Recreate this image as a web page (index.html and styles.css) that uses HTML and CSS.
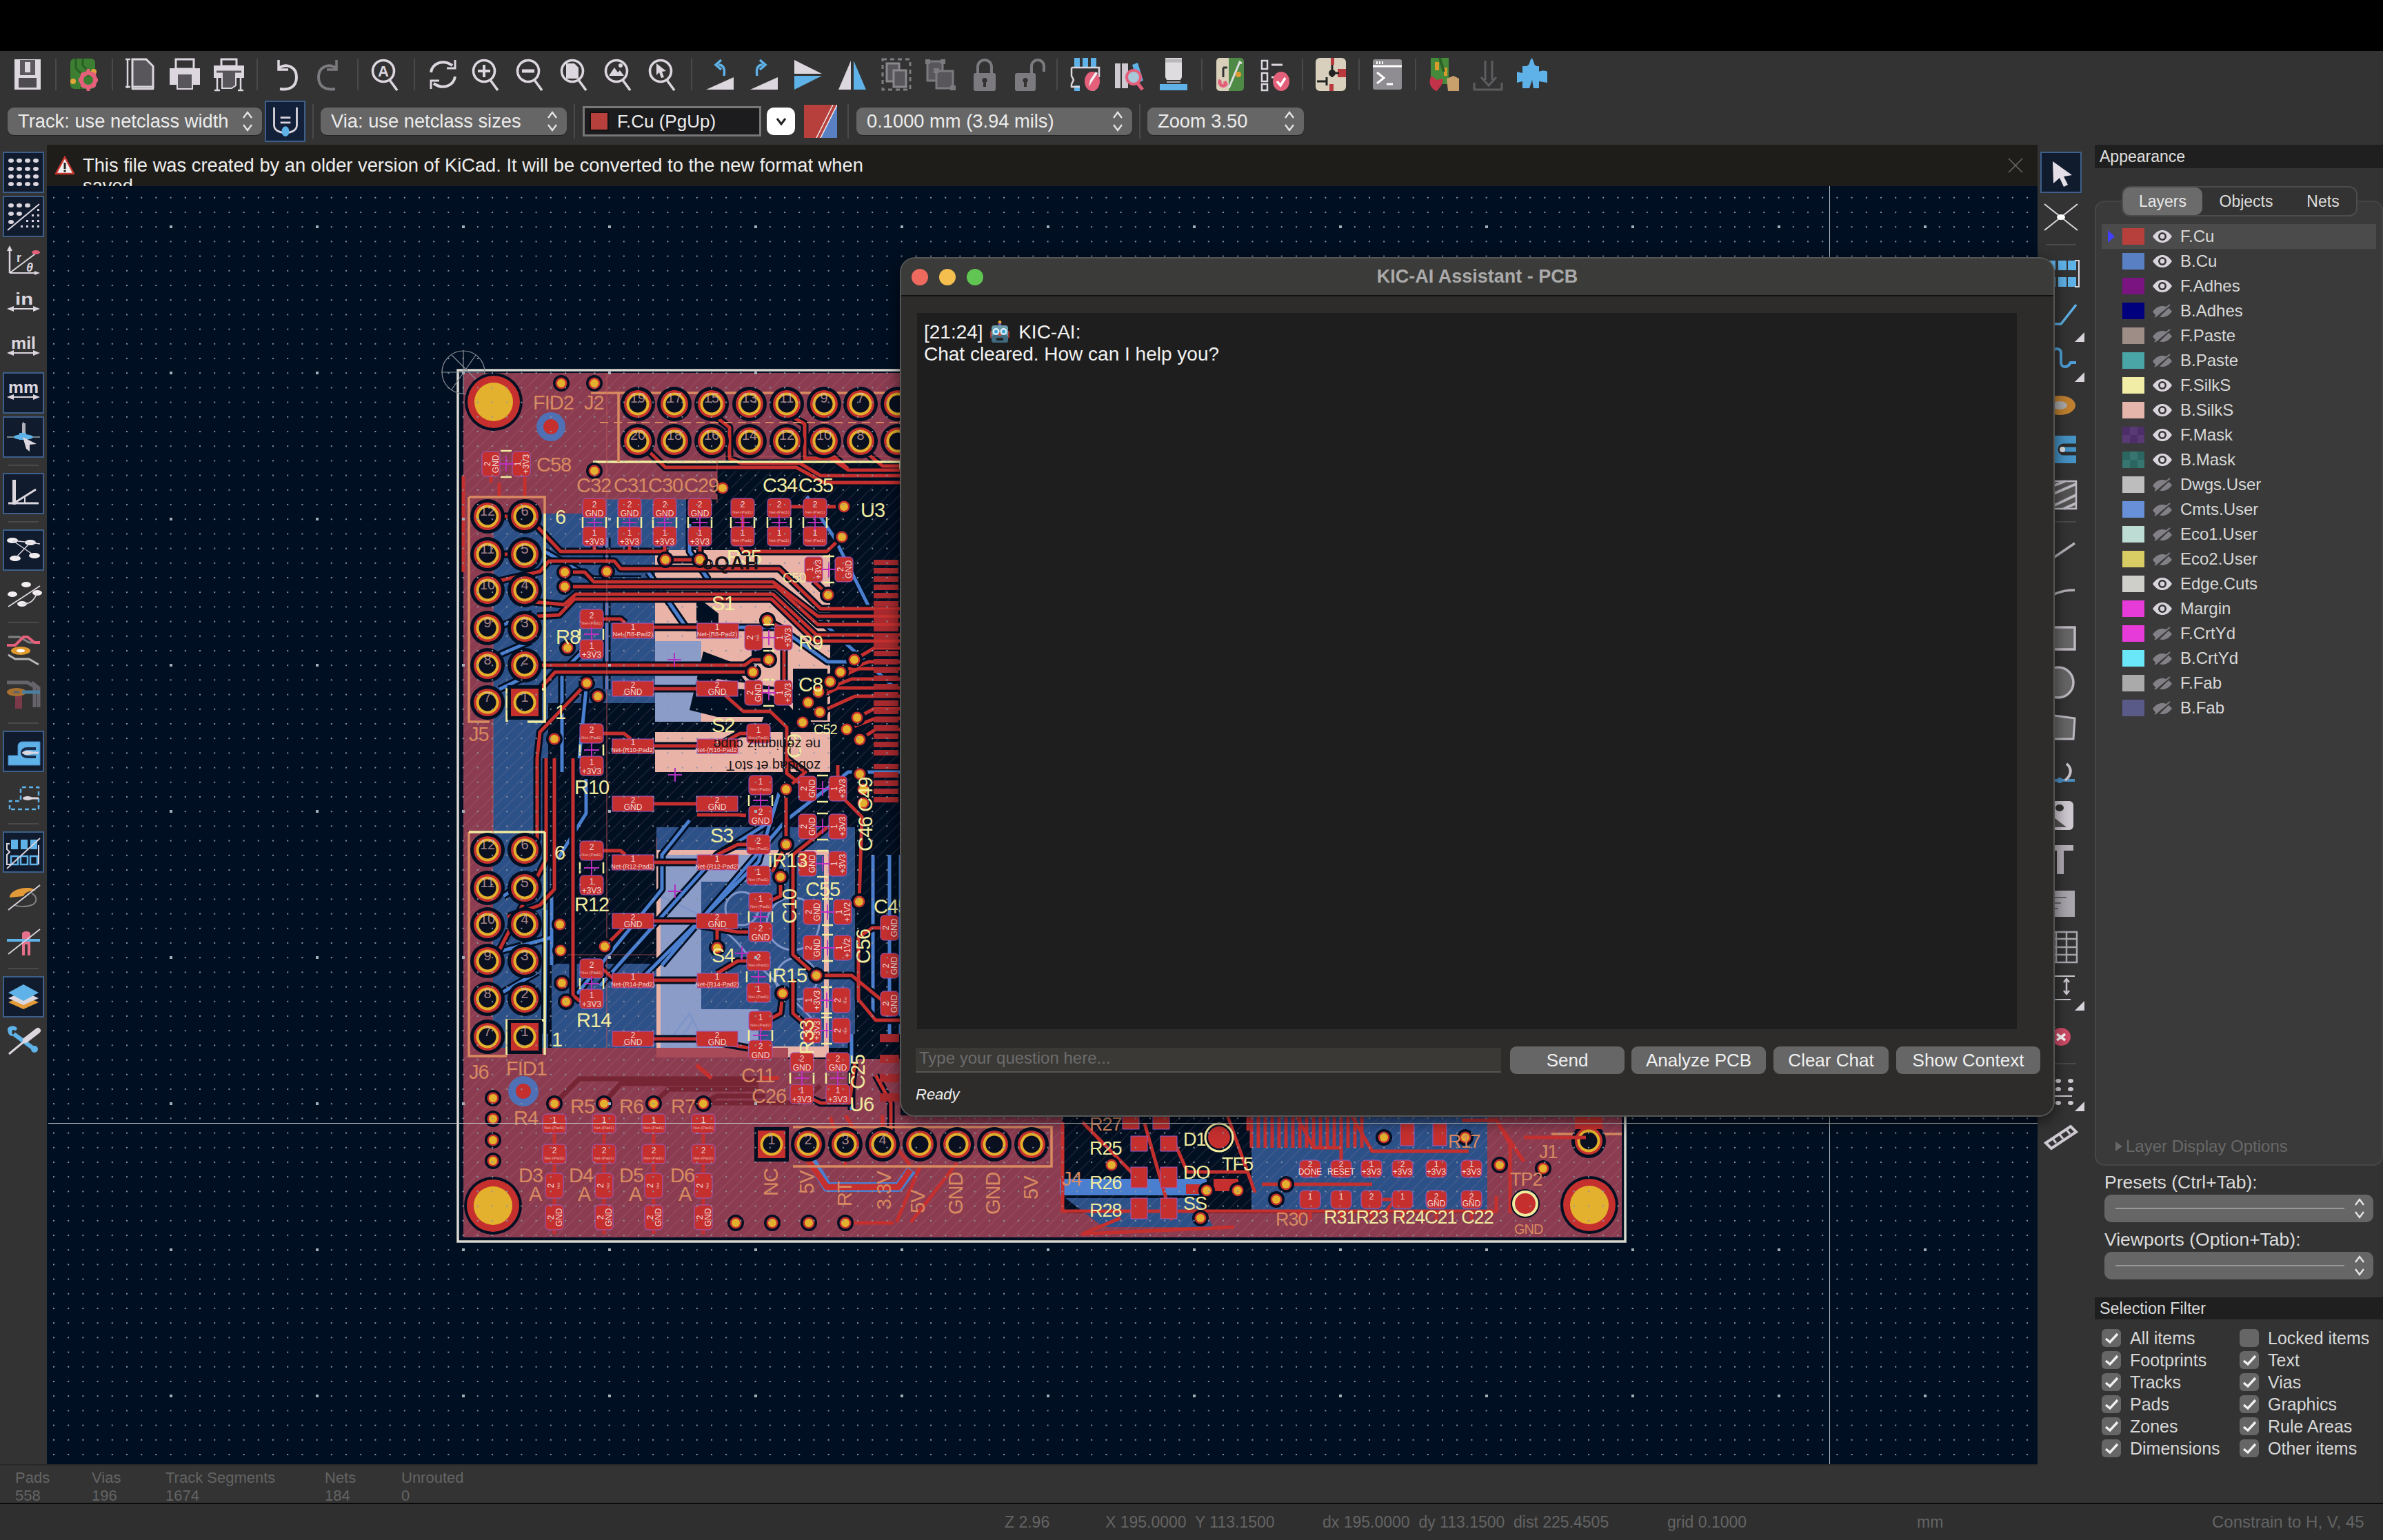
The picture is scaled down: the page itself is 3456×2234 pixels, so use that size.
FILE: index.html
```
<!DOCTYPE html>
<html lang="en">
<head>
<meta charset="utf-8">
<title>KiCad PCB Editor</title>
<link rel="stylesheet" href="styles.css">
</head>
<body>
<svg class="defs" width="0" height="0">
<defs>
<symbol id="lens" viewBox="0 0 48 48"><circle cx="20" cy="19" r="15.5" fill="none" stroke="#dcd6de" stroke-width="3.6"/><path d="M29 32l11 15" fill="none" stroke="#dcd6de" stroke-width="3.6"/></symbol>
<symbol id="eye" viewBox="0 0 30 20"><path d="M1 10C6 3 10 1 15 1s9 2 14 9c-5 7-9 9-14 9S6 17 1 10z" fill="#d9d3db"/><circle cx="15" cy="10" r="6" fill="#333"/><circle cx="15" cy="10" r="3.4" fill="#d9d3db"/></symbol>
<symbol id="eyeoff" viewBox="0 0 30 20"><path d="M1 11C6 5 10 3 15 3c2 0 4 .4 6 1.300L7 18C5 16.600 3 14 1 11zM24 6c2 1.300 3.500 3 5 5-5 6-9 8-14 8l-4-.5z" fill="#828086"/><path d="M4 19L26 1" stroke="#828086" stroke-width="2"/></symbol>
<symbol id="chk" viewBox="0 0 28 26"><path d="M6 14l6 5L23 7" fill="none" stroke="#f0f0f0" stroke-width="3.400"/></symbol>
<symbol id="chev" viewBox="0 0 16 36"><path d="M2 13l6-8 6 8M2 23l6 8 6-8" fill="none" stroke="#e4e4e4" stroke-width="2.400"/></symbol>
<symbol id="tri" viewBox="0 0 14 14"><path d="M14 0v14H0z" fill="#d8d2da"/></symbol>
</defs>
</svg>

<div class="app">
<div class="titlebar"></div>

<header class="toolbar">
<div class="tbrow">
<span class="ti"><svg class="ic" viewBox="0 0 48 48"><path d="M5 2h38v44H5z" fill="#dcd6de"/><path d="M13 3h22v22H13z" fill="#5a585c"/><path d="M20 6h8v15h-8z" fill="#dcd6de"/><path d="M11 29h26v14H11z" fill="#4d4b4f"/></svg></span>
<i class="sp"></i>
<span class="ti"><svg class="ic" viewBox="0 0 48 48"><rect x="4" y="1" width="36" height="44" rx="6" fill="#3d7f32"/><path d="M12 1v14l8 8v22M22 1v10l8 8v8" fill="none" stroke="#285f22" stroke-width="3"/><circle cx="8" cy="34" r="4" fill="#e0a63a"/><circle cx="38" cy="20" r="4" fill="#e0a63a"/><circle cx="30" cy="32" r="10" fill="none" stroke="#e4607a" stroke-width="6"/><path d="M30 16v6M30 42v6M16 32h6M38 32h6M20 22l4 4M36 38l4 4M20 42l4-4M36 26l4-4" stroke="#e4607a" stroke-width="5"/><circle cx="30" cy="32" r="3" fill="#3d7f32"/></svg></span>
<i class="sp"></i>
<span class="ti"><svg class="ic" viewBox="0 0 48 48"><path d="M12 2h20l10 10v30H12z" fill="#58565a" stroke="#dcd6de" stroke-width="3"/><path d="M5 2v42M2 2h7M2 42h7M12 46v-3M42 46v-3M12 45h30" stroke="#dcd6de" stroke-width="2.500" fill="none"/></svg></span>
<span class="ti"><svg class="ic" viewBox="0 0 48 48"><path d="M11 2h26v14H11z" fill="none" stroke="#dcd6de" stroke-width="3"/><path d="M2 15h44v24H36v7H12v-7H2z" fill="#dcd6de"/><path d="M8 22h32M14 24h20v20H14z" fill="#58565a"/></svg></span>
<span class="ti"><svg class="ic" viewBox="0 0 48 48"><path d="M13 2h22v10H13z" fill="none" stroke="#dcd6de" stroke-width="3"/><path d="M2 11h44v18H2z" fill="#dcd6de"/><path d="M14 20h20v20l-6 4H14z" fill="#58565a" stroke="#dcd6de" stroke-width="2"/><path d="M6 20h36" stroke="#58565a" stroke-width="3"/><path d="M7 29v18M41 29v18M3 47h8M37 47h8" stroke="#dcd6de" stroke-width="2.500"/></svg></span>
<i class="sp"></i>
<span class="ti"><svg class="ic" viewBox="0 0 48 48"><path d="M14 3v14h14" fill="none" stroke="#dcd6de" stroke-width="3.500"/><path d="M14 15c12-8 26-2 26 13s-12 19-24 17" fill="none" stroke="#dcd6de" stroke-width="4"/></svg></span>
<span class="ti"><svg class="ic" viewBox="0 0 48 48"><path d="M34 3v14H20" fill="none" stroke="#7c7a7e" stroke-width="3.500"/><path d="M34 15C22 7 8 13 8 28s12 19 24 17" fill="none" stroke="#7c7a7e" stroke-width="4"/></svg></span>
<i class="sp"></i>
<span class="ti"><svg class="ic" viewBox="0 0 48 48"><use href="#lens"/><text class="ict" x="20" y="27" text-anchor="middle">A</text></svg></span>
<i class="sp"></i>
<span class="ti"><svg class="ic" viewBox="0 0 48 48"><path d="M7 21C9 8 24 1 38 11M42 27C40 40 25 47 11 37" fill="none" stroke="#dcd6de" stroke-width="4"/><path d="M42 3v12H30M7 45V33h12" fill="none" stroke="#dcd6de" stroke-width="3"/></svg></span>
<span class="ti"><svg class="ic" viewBox="0 0 48 48"><use href="#lens"/><path d="M20 10v18M11 19h18" stroke="#dcd6de" stroke-width="4"/></svg></span>
<span class="ti"><svg class="ic" viewBox="0 0 48 48"><use href="#lens"/><path d="M11 19h18" stroke="#dcd6de" stroke-width="5"/></svg></span>
<span class="ti"><svg class="ic" viewBox="0 0 48 48"><use href="#lens"/><path d="M11 8h12l6 6v16H11z" fill="#dcd6de"/></svg></span>
<span class="ti"><svg class="ic" viewBox="0 0 48 48"><use href="#lens"/><path d="M9 26l8-12 5 7 3-3 6 8z" fill="#dcd6de"/><circle cx="26" cy="11" r="3" fill="#dcd6de"/></svg></span>
<span class="ti"><svg class="ic" viewBox="0 0 48 48"><use href="#lens"/><path d="M14 8l14 11-6 1 3 8-4 1-3-8-4 4z" fill="#dcd6de"/></svg></span>
<i class="sp"></i>
<span class="ti"><svg class="ic" viewBox="0 0 48 48"><path d="M4 46L44 28v18z" fill="#dcd6de"/><path d="M30 26C32 14 28 10 22 10" fill="none" stroke="#5fb2e8" stroke-width="3.500"/><path d="M26 3l-8 7 8 7" fill="none" stroke="#5fb2e8" stroke-width="3.500"/></svg></span>
<span class="ti"><svg class="ic" viewBox="0 0 48 48"><path d="M4 46L44 28v18z" fill="#dcd6de"/><path d="M14 26C12 14 16 10 22 10" fill="none" stroke="#5fb2e8" stroke-width="3.500"/><path d="M18 3l8 7-8 7" fill="none" stroke="#5fb2e8" stroke-width="3.500"/></svg></span>
<span class="ti"><svg class="ic" viewBox="0 0 48 48"><path d="M4 3l40 20H4z" fill="#dcd6de"/><path d="M4 46l40-20H4z" fill="#5fb2e8"/></svg></span>
<span class="ti"><svg class="ic" viewBox="0 0 48 48"><path d="M22 4L4 46h18z" fill="#dcd6de"/><path d="M26 4l18 42H26z" fill="#5fb2e8"/></svg></span>
<span class="ti"><svg class="ic" viewBox="0 0 48 48"><path d="M4 2h40v44H4z" fill="none" stroke="#807e82" stroke-width="3" stroke-dasharray="6 5"/><path d="M10 8h18v26H10z" fill="#58565a" stroke="#8a888c" stroke-width="3"/><path d="M20 18h18v24H20z" fill="#58565a" stroke="#8a888c" stroke-width="3"/></svg></span>
<span class="ti"><svg class="ic" viewBox="0 0 48 48"><path d="M5 5h22v28H5z" fill="#58565a" stroke="#7c7a7e" stroke-width="3"/><path d="M18 19h24v25H18z" fill="#58565a" stroke="#7c7a7e" stroke-width="3"/><path d="M2 2h7v7H2zM24 2h7v7h-7zM38 40h8v7h-8zM14 15h8v7h-8z" fill="#7c7a7e"/></svg></span>
<span class="ti"><svg class="ic" viewBox="0 0 48 48"><path d="M14 24V13a10 10 0 0 1 20 0v11" fill="none" stroke="#7c7a7e" stroke-width="4"/><rect x="8" y="22" width="32" height="26" rx="3" fill="#7c7a7e"/><path d="M24 29a3.500 3.500 0 0 1 2 6.500V42h-4v-6.500A3.500 3.500 0 0 1 24 29z" fill="#333"/></svg></span>
<span class="ti"><svg class="ic" viewBox="0 0 48 48"><path d="M28 24V12a8 8 0 0 1 18 0v8" fill="none" stroke="#7c7a7e" stroke-width="4"/><rect x="4" y="22" width="30" height="26" rx="3" fill="#7c7a7e"/><path d="M19 29a3.500 3.500 0 0 1 2 6.500V42h-4v-6.500A3.500 3.500 0 0 1 19 29z" fill="#333"/></svg></span>
<i class="sp"></i>
<span class="ti"><svg class="ic" viewBox="0 0 48 48"><path d="M8 0h8v14H8zM20 0h8v14h-8zM32 0h8v14h-8zM8 40h8v8H8zM32 40h6v8h-6z" fill="#5fb2e8"/><path d="M4 14h40v14M4 14v12l3 6-3 6v4h12" fill="none" stroke="#dcd6de" stroke-width="2.500"/><ellipse cx="34" cy="34" rx="11" ry="14" fill="#e4607a"/><path d="M29 42l2-10 8-12 3 2-8 12z" fill="#f2eef2"/></svg></span>
<span class="ti"><svg class="ic" viewBox="0 0 48 48"><path d="M3 8h8v36H3zM13 8h9v36h-9z" fill="#cfc9d1"/><path d="M28 10l8-3 8 26-8 3z" fill="#5fb2e8"/><circle cx="30" cy="28" r="10" fill="#a9c8d8" stroke="#e4607a" stroke-width="4"/><path d="M36 37l7 9" stroke="#e4607a" stroke-width="5"/></svg></span>
<span class="ti"><svg class="ic" viewBox="0 0 48 48"><path d="M12 0h24v28l-2 4H14l-2-4z" fill="#dedcde"/><path d="M12 4h24" stroke="#b9b7b9" stroke-width="5"/><path d="M14 35h20" stroke="#a8a6a8" stroke-width="2"/><path d="M4 38h40v9H4z" fill="#5fb2e8"/></svg></span>
<i class="sp"></i>
<span class="ti"><svg class="ic" viewBox="0 0 48 48"><path d="M4 5a5 5 0 0 1 5-5h13v48H9a5 5 0 0 1-5-5z" fill="#d8d0b8"/><path d="M22 0h17a5 5 0 0 1 5 5v38a5 5 0 0 1-5 5H22z" fill="#4e8a45"/><path d="M22 44L38 6l3 2" stroke="#ddd" stroke-width="3" fill="none"/><circle cx="36" cy="24" r="4" fill="#e09a2e"/><path d="M14 14h6M14 14v14" stroke="#333" stroke-width="3"/><path d="M10 32c-4 6 4 12 8 6l-2-4" fill="none" stroke="#e4607a" stroke-width="5"/></svg></span>
<span class="ti"><svg class="ic" viewBox="0 0 48 48"><path d="M6 4h8v12H6zM6 22h8v12H6zM6 38h8v9H6z" fill="#333" stroke="#dcd6de" stroke-width="2.500"/><path d="M20 10h16M20 28h10" stroke="#dcd6de" stroke-width="3"/><ellipse cx="34" cy="34" rx="12" ry="14" fill="#e4607a"/><path d="M28 34l5 6 7-11" fill="none" stroke="#fff" stroke-width="3.500"/></svg></span>
<i class="sp"></i>
<span class="ti"><svg class="ic" viewBox="0 0 48 48"><rect x="2" y="0" width="44" height="48" rx="6" fill="#d8d0bc"/><path d="M24 0h5v10h-5zM34 16h12v12H34zM22 38h6v10h-6z" fill="#b83a3e"/><path d="M26 10v6M26 22h10M26 16v12M4 34h14M18 28v12" stroke="#222" stroke-width="3"/><circle cx="26" cy="22" r="5" fill="#222"/></svg></span>
<i class="sp"></i>
<span class="ti"><svg class="ic" viewBox="0 0 48 48"><rect x="3" y="2" width="42" height="44" rx="3" fill="#8f8d91"/><path d="M3 12h42" stroke="#fff" stroke-width="3"/><path d="M8 5h2v4H8zM12 5h2v4h-2zM16 5h2v4h-2z" fill="#fff"/><path d="M9 21l10 8-10 8" fill="none" stroke="#fff" stroke-width="3"/><path d="M23 38h9" stroke="#fff" stroke-width="3"/></svg></span>
<i class="sp"></i>
<span class="ti"><svg class="ic" viewBox="0 0 48 48"><path d="M5 0h26v38H5z" fill="#458a3a"/><path d="M11 6h6v12h-6zM24 14h5v12h-5z" fill="#d69a2e"/><path d="M18 0l6 20" stroke="#2b6226" stroke-width="4"/><path d="M6 26c-6 10 0 20 8 22 4-6 10-10 8-18l-8 2z" fill="#c2334a"/><path d="M28 30l10-4 8 4v18H30z" fill="#c9a06c"/></svg></span>
<span class="ti"><svg class="ic" viewBox="0 0 48 48"><path d="M20 4v28M30 4v28M14 28l11 12 11-12M4 36v10h40V36" fill="none" stroke="#5e5c60" stroke-width="3"/></svg></span>
<span class="ti"><svg class="ic" viewBox="0 0 48 48"><path d="M24 0l3 8c0 2 2 4 5 4h2v8c3-2 10-2 12 0v16l-12-2v10H26l-2-12-4 12H10V34l-8 2V20l8 2V12h5c3 0 6-4 6-8z" fill="#5fb2e8"/></svg></span>
</div>
<div class="tbrow tbrow2">
<div class="combo c-track"><span>Track: use netclass width</span><svg class="chev"><use href="#chev"/></svg></div>
<span class="toggle"><svg class="ic" viewBox="0 0 48 48"><path d="M6 2v28c0 8 8 12 18 12s18-4 18-12V2" fill="none" stroke="#dcd6de" stroke-width="3"/><path d="M16 18h16M16 26h16" stroke="#dcd6de" stroke-width="3"/><ellipse cx="24" cy="40" rx="6" ry="8" fill="#5fb2e8"/></svg></span>
<i class="vr"></i>
<div class="combo c-via"><span>Via: use netclass sizes</span><svg class="chev"><use href="#chev"/></svg></div>
<i class="vr"></i>
<div class="layerbox"><i class="lsw"></i><span>F.Cu (PgUp)</span></div>
<span class="whitebtn"><svg class="wchev" viewBox="0 0 16 12"><path d="M2 2l6 8 6-8" fill="none" stroke="#222" stroke-width="3"/></svg></span>
<svg class="pair" viewBox="0 0 48 48"><path d="M0 0h48v48H0z" fill="#b8403c"/><path d="M0 48h24L48 0v48z" fill="#5a80c4"/><path d="M18 48L42 0M24 48L48 0" stroke="#eee" stroke-width="1.500"/></svg>
<i class="vr v2"></i>
<div class="combo c-grid"><span>0.1000 mm (3.94 mils)</span><svg class="chev"><use href="#chev"/></svg></div>
<i class="vr"></i>
<div class="combo c-zoom"><span>Zoom 3.50</span><svg class="chev"><use href="#chev"/></svg></div>
</div>
</header>

<main class="work">
<nav class="ltool">
<span class="tv sel"><svg class="ic" viewBox="0 0 48 48"><g fill="#dcd6de"><ellipse cx="6" cy="7" rx="4" ry="3"/><ellipse cx="18" cy="7" rx="4" ry="3"/><ellipse cx="30" cy="7" rx="4" ry="3"/><ellipse cx="42" cy="7" rx="4" ry="3"/><ellipse cx="6" cy="19" rx="4" ry="3"/><ellipse cx="18" cy="19" rx="4" ry="3"/><ellipse cx="30" cy="19" rx="4" ry="3"/><ellipse cx="42" cy="19" rx="4" ry="3"/><ellipse cx="6" cy="30" rx="4" ry="3"/><ellipse cx="18" cy="30" rx="4" ry="3"/><ellipse cx="30" cy="30" rx="4" ry="3"/><ellipse cx="42" cy="30" rx="4" ry="3"/><ellipse cx="6" cy="41" rx="4" ry="3"/><ellipse cx="18" cy="41" rx="4" ry="3"/><ellipse cx="30" cy="41" rx="4" ry="3"/><ellipse cx="42" cy="41" rx="4" ry="3"/></g></svg></span>
<span class="tv sel"><svg class="ic" viewBox="0 0 48 48"><g fill="#dcd6de"><ellipse cx="6" cy="8" rx="4" ry="3"/><ellipse cx="18" cy="8" rx="4" ry="3"/><ellipse cx="30" cy="8" rx="4" ry="3"/><ellipse cx="6" cy="20" rx="4" ry="3"/><ellipse cx="18" cy="20" rx="4" ry="3"/><ellipse cx="6" cy="32" rx="4" ry="3"/><path d="M20 37h3v3h-3zM28 37h3v3h-3zM36 37h3v3h-3zM44 37h3v3h-3zM28 29h3v3h-3zM36 29h3v3h-3zM44 29h3v3h-3zM36 21h3v3h-3zM44 21h3v3h-3zM44 13h3v3h-3z"/></g><path d="M1 44L47 6" stroke="#dcd6de" stroke-width="2"/></svg></span>
<span class="tv"><svg class="ic" viewBox="0 0 48 48"><path d="M4 42V6" stroke="#dcd6de" stroke-width="2.500"/><path d="M4 2l-4 8h8z" fill="#dcd6de"/><path d="M4 42h40" stroke="#dcd6de" stroke-width="2"/><path d="M48 42l-8-3v6z" fill="#dcd6de"/><path d="M4 42L44 12" stroke="#dcd6de" stroke-width="2"/><ellipse cx="42" cy="12" rx="6" ry="3" fill="#e4607a"/><text class="ict2" x="14" y="26">r</text><text class="ict2 it" x="28" y="40">θ</text></svg></span>
<span class="tv"><svg class="ic" viewBox="0 0 48 48"><text class="ict3" x="12" y="24" textLength="26" lengthAdjust="spacingAndGlyphs">in</text><path d="M0 30l10-4v3h28v-3l10 4-10 4v-3H10v3z" fill="#dcd6de"/></svg></span>
<span class="tv"><svg class="ic" viewBox="0 0 48 48"><text class="ict3" x="6" y="24" textLength="36" lengthAdjust="spacingAndGlyphs">mil</text><path d="M0 30l10-4v3h28v-3l10 4-10 4v-3H10v3z" fill="#dcd6de"/></svg></span>
<span class="tv sel"><svg class="ic" viewBox="0 0 48 48"><text class="ict3" x="2" y="24" textLength="44" lengthAdjust="spacingAndGlyphs">mm</text><path d="M0 30l10-4v3h28v-3l10 4-10 4v-3H10v3z" fill="#dcd6de"/></svg></span>
<span class="tv sel"><svg class="ic" viewBox="0 0 48 48"><path d="M0 24h48M24 2v22" stroke="#9aa" stroke-width="1.500"/><path d="M22 4h5v14h-5z" fill="#b0b0b8"/><ellipse cx="24" cy="24" rx="14" ry="4" fill="#5fb2e8"/><path d="M18 18h10v10H18z" fill="#5fb2e8"/><path d="M23 24l20 10-10 1 0 10-5-4z" fill="#dcd6de"/></svg></span>
<i class="hs"></i>
<span class="tv sel"><svg class="ic" viewBox="0 0 48 48"><path d="M8 4h5v36H8z" fill="#dcd6de"/><path d="M2 38h44" stroke="#dcd6de" stroke-width="3"/><path d="M10 38L42 18" stroke="#dcd6de" stroke-width="3"/><path d="M26 28v10" stroke="#dcd6de" stroke-width="2"/></svg></span>
<i class="hs"></i>
<span class="tv sel"><svg class="ic" viewBox="0 0 48 48"><g fill="#f2eef2"><ellipse cx="8" cy="10" rx="8" ry="4"/><ellipse cx="34" cy="13" rx="8" ry="4"/><ellipse cx="12" cy="36" rx="8" ry="4"/><ellipse cx="40" cy="32" rx="8" ry="4"/></g><path d="M8 10l26 3 14 2M8 10l32 22M12 36l22-23" stroke="#dcd6de" stroke-width="1.500"/></svg></span>
<span class="tv"><svg class="ic" viewBox="0 0 48 48"><path d="M2 42L48 12" stroke="#dcd6de" stroke-width="1.800"/><g fill="#f2eef2"><ellipse cx="8" cy="24" rx="7" ry="4"/><ellipse cx="28" cy="10" rx="7" ry="4"/><ellipse cx="44" cy="22" rx="7" ry="4"/><ellipse cx="22" cy="38" rx="7" ry="4"/></g><path d="M22 38c10 0 16-2 22-16" fill="none" stroke="#dcd6de" stroke-width="1.800"/></svg></span>
<i class="hs"></i>
<span class="tv"><svg class="ic" viewBox="0 0 48 48"><path d="M2 4h16l14 8h16" fill="none" stroke="#b8b6ba" stroke-width="3" opacity=".6"/><path d="M0 16h12l12-12h6l10 8h8" fill="none" stroke="#e4607a" stroke-width="4"/><path d="M2 30l10 6h20l14 8" fill="none" stroke="#b8b6ba" stroke-width="3"/><ellipse cx="20" cy="24" rx="14" ry="6" fill="#e09a2e"/><ellipse cx="20" cy="24" rx="6" ry="2.500" fill="#fff"/></svg></span>
<span class="tv"><svg class="ic" viewBox="0 0 48 48"><path d="M0 6h30l10 6v30M36 6l10 8v28" fill="none" stroke="#66646a" stroke-width="5"/><path d="M12 20h10v24H12z" fill="#7a3a4a"/><ellipse cx="14" cy="20" rx="14" ry="6" fill="#a87030"/><ellipse cx="14" cy="20" rx="5" ry="2" fill="#666"/><path d="M22 20h26" stroke="#4a7fa0" stroke-width="5"/></svg></span>
<i class="hs"></i>
<span class="tv sel"><svg class="ic" viewBox="0 0 48 48"><path d="M2 44V30h14V16a6 6 0 0 1 6-6h26v34z" fill="#5fb2e8" stroke="#4488c8" stroke-width="1"/><path d="M42 20H30c-6 0-8 3-8 6s2 6 8 6h12" fill="none" stroke="#1a2c4a" stroke-width="4"/><ellipse cx="30" cy="26" rx="8" ry="3" fill="#dcd6de"/><path d="M30 26h16" stroke="#dcd6de" stroke-width="3"/></svg></span>
<span class="tv"><svg class="ic" viewBox="0 0 48 48"><path d="M4 44V32h16V12h26v32z" fill="none" stroke="#5fb2e8" stroke-width="2.500" stroke-dasharray="6 4"/><ellipse cx="30" cy="28" rx="7" ry="3" fill="#dcd6de"/><path d="M30 28h16" stroke="#dcd6de" stroke-width="3"/></svg></span>
<i class="hs"></i>
<span class="tv sel"><svg class="ic" viewBox="0 0 48 48"><path d="M6 6h10v14H6zM20 6h10v14H20zM34 6h10v14H34z" fill="#5fb2e8"/><path d="M6 30h10v12H6zM20 30h10v12H20zM34 30h10v12H34z" fill="none" stroke="#5fb2e8" stroke-width="2.500"/><path d="M4 12H0v8l4 4-4 4v14h6M46 14v28" fill="none" stroke="#dcd6de" stroke-width="2"/><path d="M0 48L48 4" stroke="#dcd6de" stroke-width="1.800"/></svg></span>
<span class="tv"><svg class="ic" viewBox="0 0 48 48"><path d="M4 26c0-8 12-14 26-14 6 0 10 2 12 4-8-1-16 3-18 8z" fill="#e39a38"/><path d="M10 36c6 4 20 4 28 0 6-4 6-12-2-16" fill="none" stroke="#807e82" stroke-width="2"/><path d="M2 44L48 8" stroke="#dcd6de" stroke-width="1.800"/></svg></span>
<span class="tv"><svg class="ic" viewBox="0 0 48 48"><path d="M22 14h12v32h-4V30h-4v16h-4z" fill="#e4708a"/><ellipse cx="28" cy="14" rx="6" ry="3" fill="#e4708a"/><path d="M0 24h48" stroke="#5fb2e8" stroke-width="4"/><path d="M2 44L48 8" stroke="#dcd6de" stroke-width="1.800"/></svg></span>
<i class="hs"></i>
<span class="tv sel"><svg class="ic" viewBox="0 0 48 48"><path d="M24 22l22 10-22 10L2 32z" fill="#e39a38"/><path d="M24 16l22 10-22 10L2 26z" fill="#dcd6de"/><path d="M24 6l22 12-22 12L2 18z" fill="#5fb2e8"/></svg></span>
<span class="tv"><svg class="ic" viewBox="0 0 48 48"><path d="M10 14L40 36" stroke="#5fb2e8" stroke-width="6"/><path d="M1 6c4-5 11-5 14 0l-2 3-5-1-1 5 3 2-3 2C3 16 1 12 1 6z" fill="#5fb2e8"/><circle cx="40" cy="36" r="5" fill="#5fb2e8"/><path d="M27 23L45 9" stroke="#dcd6de" stroke-width="8" stroke-linecap="round"/><path d="M3 43L27 23" stroke="#dcd6de" stroke-width="3"/></svg></span>
</nav>

<section class="canvas">
<svg class="board" width="2887" height="1914" viewBox="68 210 2887 1914">
<defs>
<pattern id="mn" x="77" y="285.800" width="21.200" height="21.200" patternUnits="userSpaceOnUse"><rect width="2" height="2" fill="#8a95a3"/></pattern>
<pattern id="mj" x="246" y="327" width="212" height="212" patternUnits="userSpaceOnUse"><rect width="4" height="4" fill="#a6aeb8"/></pattern>
<pattern id="ht" width="17" height="17" patternUnits="userSpaceOnUse"><path d="M0 17L17 0" stroke="#d9a0a8" stroke-opacity=".13" stroke-width="1.500"/></pattern>
<g id="tht"><circle r="25" fill="#010f22"/><circle r="20" fill="#c5302f"/><circle r="16.500" fill="#e3b12d"/><circle r="12.500" fill="#0a1020"/></g>
<g id="tsq"><path d="M-25-25h50v50h-50z" fill="#010f22"/><path d="M-20-20h40v40h-40z" fill="#c5302f"/><circle r="16.500" fill="#e3b12d"/><circle r="12.500" fill="#0a1020"/></g>
<g id="via"><circle r="12" fill="#010f22"/><circle r="8.500" fill="#c5302f"/><circle r="6" fill="#e3b12d"/></g>
<rect id="pv" x="-17" y="-14" width="34" height="28" rx="5"/>
<rect id="ph" x="-13" y="-18" width="26" height="36" rx="5"/>
<g id="vG"><use href="#pv" class="pd"/><text class="pn" y="-1">2</text><text class="pn" y="12">GND</text></g>
<g id="v3"><use href="#pv" class="pd"/><text class="pn" y="-1">1</text><text class="pn" y="12">+3V3</text></g>
<g id="v2s"><use href="#pv" class="pd"/><text class="pn" y="-1">2</text><text class="pm" y="8">Net-(Pad1)</text></g>
<g id="v1s"><use href="#pv" class="pd"/><text class="pn" y="-1">1</text><text class="pm" y="8">Net-(Pad1)</text></g>
<g id="hG"><use href="#ph" class="pd"/><text class="pn" transform="rotate(-90)" y="-1">2</text><text class="pn" transform="rotate(-90)" y="11">GND</text></g>
<g id="h3"><use href="#ph" class="pd"/><text class="pn" transform="rotate(-90)" y="-1">1</text><text class="pn" transform="rotate(-90)" y="11">+3V3</text></g>
<g id="h12"><use href="#ph" class="pd"/><text class="pn" transform="rotate(-90)" y="-1">1</text><text class="pn" transform="rotate(-90)" y="11">+1V2</text></g>
<g id="h2s"><use href="#ph" class="pd"/><text class="pn" transform="rotate(-90)" y="-1">2</text><text class="pm" transform="rotate(-90)" y="8">Net</text></g>
<g id="rG"><rect class="pd" x="-30" y="-11" width="60" height="22"/><text class="pn" y="-1">2</text><text class="pn" y="9">GND</text></g>
<g id="mk"><path d="M-11 0h22M0-11v22" stroke="#c030c0" stroke-width="1.800"/><path d="M-17-8v16M17-8v16" stroke="#f1eca0" stroke-width="2.500"/></g>
<g id="mh"><path d="M-11 0h22M0-11v22" stroke="#c030c0" stroke-width="1.800"/><path d="M-8-19h16M-8 19h16" stroke="#f1eca0" stroke-width="2.500"/></g>

<g id="rt">
<path d="M707 749H761M707 804H761M770 754L813 800H961L965 812H1015"/>
<path d="M862 791V800M913 791V800M964 791V812M1015 791V812"/>
<path d="M718 844L783 829L796 814H891L900 825H1130L1190 883H1306"/>
<path d="M819 830H848L861 844H1121L1186 894H1306"/>
<path d="M819 851H1126L1186 906H1306"/>
<path d="M774 873L818 877L835 862H1121L1184 921H1306"/>
<path d="M779 894L811 892L833 869H1119L1182 930H1306"/>
<path d="M779 965H1080L1091 957H1115"/>
<path d="M772 1012L805 975H1092"/>
<path d="M851 991L783 1062L779 1100V1217L761 1233"/>
<path d="M736 1330L783 1313L804 1290V1100M718 1390L792 1247V1100"/>
<path d="M831 1100V1444L842 1453M1113 900L1137 913V994"/>
<path d="M948 999H1011M948 910H1011M873 898H900L907 904M1052 1009L1078 1032H1117L1141 1055V1122L1165 1140"/>
<path d="M1221 779L1199 800H1078L1074 793M1077 750V766M1224 735H1130"/>
<path d="M1201 863L1180 843M1239 957L1268 940H1306M1219 975L1260 960H1306M1204 989L1245 970H1306M1187 1004L1235 985H1306M1172 1019L1215 998H1306M1189 1033L1240 1010H1306M1243 1041L1268 1028H1306M1228 1058L1270 1042H1306M1247 1073L1270 1058H1306"/>
<path d="M935 649L965 678H1155L1195 700H1306M1032 600L1058 620V665L1075 672H1160L1190 690H1306M1141 600L1167 615V665H1205L1230 682H1306M1195 650L1230 680M1248 650L1280 676H1306"/>
<path d="M948 1082H1011M873 1064H905L915 1072M1040 1082L1073 1064H1085M948 1166H1011M1011 1182H1070L1082 1183M1103 1139V1125M873 1234H900L907 1240M948 1251H1011M1040 1240L1070 1225H1085M948 1336H1011M1040 1348V1375M1011 1342L1070 1352H1085M873 1405L890 1420M948 1422H1011M1040 1412L1070 1394H1085M948 1507H1011M1011 1507L1085 1520M877 1373L905 1345"/>
<path d="M1140 1145L1168 1120L1140 1100M1140 1145V1225L1120 1265M1132 1272V1300L1110 1310M1135 1441L1132 1470L1110 1482M1184 1415H1235L1290 1460M1246 1308L1250 1185L1215 1150L1215 1110M1184 1415L1150 1385V1240L1200 1200M1178 1495L1150 1470V1420M1290 1346H1265L1245 1360V1450L1270 1480H1306M1240 1540L1232 1600H1190L1163 1587M1270 1560L1292 1600V1650"/>
</g>
<g id="bt">
<path d="M726 908L772 890M724 950L770 930M724 1000L770 978L772 945M815 1030V975L850 940M815 1120V1000M840 1100L850 1000"/>
<path d="M790 800L860 840H930M940 830L995 910H1130L1200 960H1306M1000 760V800L1040 860M880 780V1000"/>
<path d="M1260 880L1210 780L1170 720M1300 1000L1190 900"/>
<path d="M800 1400V1260L850 1180V1130M830 1450L960 1290V1240L1000 1190M870 1430L1040 1240L1120 1190M930 1420L1100 1250L1130 1150M960 1400L1140 1190L1230 1120H1306"/>
<path d="M1290 1240V1500M1306 1240V1500M1266 1240V1480M725 1380L800 1360M730 1300L790 1260M728 1440L780 1410"/>
<path d="M792 1320L790 1500M1235 1500V1610"/>
</g>
</defs>

<rect x="70" y="270" width="2885" height="1854" class="bg"/>

<rect x="664" y="537" width="1693" height="1264" class="edge"/>

<path class="blue" d="M715 745H845V724H995V800H950V1020H795V1520H715zM800 1398H952V1200H1240V1520H800z"/>
<path class="maroon" d="M672 541H1306V668H1040V724H845V745H715V1520H1143V1536H1306V1618H1541V1757L1630 1795H672z"/>
<path class="maroon" d="M1541 1760H2352V1795H1541zM2157 1618H2352V1795H2157z"/>
<path class="blue" d="M1815 1618H2157V1757H1815zM1545 1738H1735L1760 1780H1600z"/>
<rect x="672" y="541" width="1680" height="1254" fill="url(#ht)"/>

<path class="pink" d="M950 798H1204V1047H950zM950 1062H1204V1120H950z"/>
<path class="lav" d="M950 930H1017V1047H950z"/>
<path class="bg" d="M1000 1030L1020 945L1060 960L1090 1000L1130 1000L1120 1040H1040zM1090 940H1120V960H1090zM1010 865L1042 890L1042 926L1010 926zM1150 970H1200V1045H1150zM1115 1020H1150L1165 1047H1105z M1018 1010C1050 990 1130 1000 1150 1030L1150 1000L1040 985z"/>
<path class="pinkl" d="M952 1233H1202V1240H952zM952 1233H960V1534H952zM1195 1233H1202V1534H1195zM952 1518H1202V1534H952z"/>
<path class="lav" d="M958 1240H1017V1464H958zM1017 1240H1117V1279H1017zM958 1464H1100V1520H958z"/>
<path class="outl" d="M958 1300C1000 1320 1050 1340 1080 1380C1120 1420 1150 1450 1180 1480M970 1510L1000 1470L1020 1510M985 1510L1005 1480"/>
<circle class="outl" cx="1076" cy="1318" r="24"/><circle class="outl" cx="1150" cy="1340" r="38"/><circle class="outl" cx="1155" cy="1420" r="30"/>
<path class="maroon2" d="M952 1520H1143V1534H952z"/>

<use href="#bt" class="halo"/>
<use href="#bt" class="btk"/>
<use href="#rt" class="halo"/>
<use href="#rt" class="rtk"/>

<path class="mgrp" d="M805 1600L840 1565H1100M876 1600L900 1572H1100M948 1600L970 1580H1100M1020 1600L1040 1590H1110M1000 1600H1160L1190 1575"/>
<path class="rthick" d="M1010 1545L1032 1564M1105 1564H1130"/>
<path class="rtk" d="M672 690V830M804 1640V1790M876 1640V1790M948 1640V1790M1020 1640V1790"/>
<path class="rtk" d="M724 700L724 720M761 689V725M712 690V700"/>
<path class="btkw" d="M1176 1683L1200 1722H1303L1322 1697"/>
<path class="rthk" d="M1172 1683L1199 1722H1303L1320 1697"/>
<path class="rtk" d="M1226 1690L1204 1620M1334 1693L1300 1773M1388 1687L1321 1773M1226 1774H1296M1280 1640L1320 1690"/>
<path class="rtk" d="M1280 1618V1650M1226 1618L1240 1640"/>
<path class="btk2" d="M1537 1722H1750"/>
<rect x="1720" y="1718" width="20" height="14" fill="#c5302f"/>
<rect x="1760" y="1710" width="36" height="18" fill="#c5302f"/>

<path class="rtk" d="M1541 1628V1757H1840M1570 1628L1660 1720M1700 1650L1722 1700H1810M1733 1757H1810M1780 1618L1820 1730M1880 1618L1905 1665H1945V1683M1960 1618L1990 1670H2130M1815 1757H2170V1735M2010 1757L2034 1727M2120 1625H2170L2190 1660V1760M1830 1718H1990M1989 1740H2034M2083 1757V1770M2134 1757V1770M1900 1757V1770M1945 1757V1770M1989 1757V1770M2034 1757V1770"/>
<path class="rtk" d="M1625 1767L1570 1790L1790 1780M1660 1630L1700 1770M1810 1618V1640M1885 1757V1768"/>
<g class="fine"><path d="M1815 1618V1665M1825 1618V1665M1835 1618V1665M1845 1618V1665M1855 1618V1665M1865 1618V1665M1875 1618V1665M1885 1618V1665M1895 1618V1665M1905 1618V1665M1915 1618V1665M1925 1618V1665M1935 1618V1665M1945 1618V1665M1955 1618V1665M1965 1618V1665M1975 1618V1665"/></g>
<path class="silko" d="M1150 1635H1525V1692H1150M680 721H790V1047M680 721V1047H710M680 1207V1532H735M2250 1645H2352"/>
<path class="silky" d="M790 745V1047H765M735 1047V1000H790M790 1207V1530M735 1530V1480H790M680 1207H790M860 670H1306V680" />
<path class="silko" d="M857 570H1306V628M897 570V670"/>
<path class="dash" d="M870 613H1306"/>
<path class="thin" d="M1040 662H1306M1040 662V730M845 724H1040M715 745V1240M880 541V1520M952 1215V1233M800 1385H952"/>

<path class="cir" d="M672 508v64M640 540h64M655 515L705 565M690 515L655 565"/>
<circle class="cir" cx="672" cy="540" r="31"/>

<circle cx="716" cy="583" r="42" class="bgd"/><circle cx="716" cy="583" r="38" class="rd"/><circle cx="716" cy="583" r="28" class="yl"/>
<circle cx="715" cy="1749" r="42" class="bgd"/><circle cx="715" cy="1749" r="38" class="rd"/><circle cx="715" cy="1749" r="28" class="yl"/>
<circle cx="2305" cy="1748" r="42" class="bgd"/><ellipse cx="2305" cy="1748" rx="38" ry="38" class="rd"/><ellipse cx="2305" cy="1748" rx="28" ry="28" class="yl"/>
<circle cx="799" cy="619" r="21" class="bl"/><circle cx="799" cy="619" r="11" class="rd"/>
<circle cx="759" cy="1583" r="22" class="bl"/><circle cx="759" cy="1583" r="11" class="rd"/>

<use href="#tht" x="925" y="586"/><use href="#tht" x="978" y="586"/><use href="#tht" x="1032" y="586"/><use href="#tht" x="1087" y="586"/><use href="#tht" x="1141" y="586"/><use href="#tht" x="1195" y="586"/><use href="#tht" x="1248" y="586"/><use href="#tht" x="1302" y="586"/>
<use href="#tht" x="925" y="640"/><use href="#tht" x="978" y="640"/><use href="#tht" x="1032" y="640"/><use href="#tht" x="1087" y="640"/><use href="#tht" x="1141" y="640"/><use href="#tht" x="1195" y="640"/><use href="#tht" x="1248" y="640"/><use href="#tht" x="1302" y="640"/>
<g class="plbl"><text x="925" y="584">19</text><text x="978" y="584">17</text><text x="1032" y="584">15</text><text x="1087" y="584">13</text><text x="1141" y="584">11</text><text x="1195" y="584">9</text><text x="1248" y="584">7</text><text x="925" y="638">20</text><text x="978" y="638">18</text><text x="1032" y="638">16</text><text x="1087" y="638">14</text><text x="1141" y="638">12</text><text x="1195" y="638">10</text><text x="1248" y="638">8</text></g>

<use href="#tht" x="707" y="749"/><use href="#tht" x="761" y="749"/><use href="#tht" x="707" y="804"/><use href="#tht" x="761" y="804"/><use href="#tht" x="707" y="856"/><use href="#tht" x="761" y="856"/><use href="#tht" x="707" y="911"/><use href="#tht" x="761" y="911"/><use href="#tht" x="707" y="965"/><use href="#tht" x="761" y="965"/><use href="#tht" x="707" y="1019"/><use href="#tsq" x="761" y="1019"/>
<use href="#tht" x="707" y="1233"/><use href="#tht" x="761" y="1233"/><use href="#tht" x="707" y="1288"/><use href="#tht" x="761" y="1288"/><use href="#tht" x="707" y="1341"/><use href="#tht" x="761" y="1341"/><use href="#tht" x="707" y="1394"/><use href="#tht" x="761" y="1394"/><use href="#tht" x="707" y="1449"/><use href="#tht" x="761" y="1449"/><use href="#tht" x="707" y="1504"/><use href="#tsq" x="761" y="1504"/>
<g class="plbl"><text x="707" y="748">12</text><text x="761" y="748">6</text><text x="707" y="803">11</text><text x="761" y="803">5</text><text x="707" y="855">10</text><text x="761" y="855">4</text><text x="707" y="910">9</text><text x="761" y="910">3</text><text x="707" y="964">8</text><text x="761" y="964">2</text><text x="707" y="1018">7</text><text x="761" y="1018">1</text>
<text x="707" y="1232">12</text><text x="761" y="1232">6</text><text x="707" y="1287">11</text><text x="761" y="1287">5</text><text x="707" y="1340">10</text><text x="761" y="1340">4</text><text x="707" y="1393">9</text><text x="761" y="1393">3</text><text x="707" y="1448">8</text><text x="761" y="1448">2</text><text x="707" y="1503">7</text><text x="761" y="1503">1</text></g>

<use href="#tsq" x="1119" y="1660"/><use href="#tht" x="1172" y="1660"/><use href="#tht" x="1226" y="1660"/><use href="#tht" x="1280" y="1660"/><use href="#tht" x="1334" y="1660"/><use href="#tht" x="1388" y="1660"/><use href="#tht" x="1442" y="1660"/><use href="#tht" x="1496" y="1660"/>
<g class="plbl"><text x="1119" y="1660">1</text><text x="1172" y="1660">2</text><text x="1226" y="1660">3</text><text x="1280" y="1660">4</text></g>

<use href="#via" x="814" y="556"/><use href="#via" x="862" y="556"/><use href="#via" x="862" y="683"/><use href="#via" x="1048" y="708"/><use href="#via" x="1224" y="735"/><use href="#via" x="1221" y="779"/><use href="#via" x="965" y="812"/><use href="#via" x="1015" y="812"/><use href="#via" x="880" y="829"/><use href="#via" x="819" y="830"/><use href="#via" x="819" y="851"/><use href="#via" x="1201" y="863"/><use href="#via" x="1113" y="900"/><use href="#via" x="1115" y="957"/><use href="#via" x="1092" y="975"/><use href="#via" x="1239" y="957"/><use href="#via" x="1219" y="975"/><use href="#via" x="1204" y="989"/><use href="#via" x="1187" y="1004"/><use href="#via" x="1172" y="1019"/><use href="#via" x="1189" y="1033"/><use href="#via" x="1243" y="1041"/><use href="#via" x="1228" y="1058"/><use href="#via" x="1247" y="1073"/><use href="#via" x="1164" y="1048"/><use href="#via" x="823" y="940"/><use href="#via" x="851" y="991"/><use href="#via" x="867" y="1010"/>
<use href="#via" x="804" y="1072"/><use href="#via" x="812" y="1341"/><use href="#via" x="813" y="1379"/><use href="#via" x="815" y="1426"/><use href="#via" x="821" y="1453"/><use href="#via" x="877" y="1373"/><use href="#via" x="1040" y="1375"/><use href="#via" x="1140" y="1145"/><use href="#via" x="1140" y="1225"/><use href="#via" x="1132" y="1272"/><use href="#via" x="1135" y="1441"/><use href="#via" x="1184" y="1415"/><use href="#via" x="1246" y="1308"/><use href="#via" x="1247" y="1123"/><use href="#via" x="1252" y="1145"/><use href="#via" x="1252" y="1165"/>
<use href="#via" x="804" y="1601"/><use href="#via" x="876" y="1601"/><use href="#via" x="948" y="1601"/><use href="#via" x="1020" y="1601"/>
<use href="#via" x="715" y="1593"/><use href="#via" x="715" y="1623"/><use href="#via" x="715" y="1654"/><use href="#via" x="715" y="1684"/>
<use href="#via" x="1067" y="1774"/><use href="#via" x="1120" y="1774"/><use href="#via" x="1173" y="1774"/><use href="#via" x="1226" y="1774"/>
<use href="#via" x="1612" y="1690"/><use href="#via" x="1750" y="1727"/><use href="#via" x="1795" y="1727"/><use href="#via" x="1865" y="1718"/><use href="#via" x="1851" y="1740"/><use href="#via" x="1741" y="1767"/><use href="#via" x="2007" y="1650"/><use href="#via" x="2125" y="1650"/><use href="#via" x="2175" y="1690"/><use href="#via" x="2238" y="1695"/>

<g class="pdt">
<use href="#vG" x="862" y="737"/><use href="#v3" x="862" y="778"/><use href="#mk" x="862" y="758"/>
<use href="#vG" x="913" y="737"/><use href="#v3" x="913" y="778"/><use href="#mk" x="913" y="758"/>
<use href="#vG" x="964" y="737"/><use href="#v3" x="964" y="778"/><use href="#mk" x="964" y="758"/>
<use href="#vG" x="1015" y="737"/><use href="#v3" x="1015" y="778"/><use href="#mk" x="1015" y="758"/>
<use href="#v2s" x="1077" y="737"/><use href="#v1s" x="1077" y="778"/><use href="#mk" x="1077" y="758"/>
<use href="#v2s" x="1130" y="737"/><use href="#v1s" x="1130" y="778"/><use href="#mk" x="1130" y="758"/>
<use href="#v2s" x="1182" y="737"/><use href="#v1s" x="1182" y="778"/><use href="#mk" x="1182" y="758"/>
<use href="#v2s" x="858" y="898"/><use href="#v3" x="858" y="942"/><use href="#mk" x="858" y="920"/>
<use href="#hG" x="712" y="673"/><use href="#h3" x="756" y="673"/><use href="#mh" x="734" y="673"/>
<use href="#h3" x="1180" y="826"/><use href="#hG" x="1224" y="826"/><use href="#mh" x="1202" y="826"/>
<use href="#h2s" x="1093" y="925"/><use href="#h3" x="1136" y="925"/><use href="#mh" x="1115" y="925"/>
<use href="#hG" x="1093" y="1005"/><use href="#h3" x="1136" y="1005"/><use href="#mh" x="1115" y="1005"/>
<use href="#hG" x="1171" y="1144"/><use href="#h3" x="1215" y="1144"/><use href="#mh" x="1193" y="1144"/>
<use href="#hG" x="1171" y="1199"/><use href="#h3" x="1215" y="1199"/><use href="#mh" x="1193" y="1199"/>
<use href="#hG" x="1171" y="1253"/><use href="#h3" x="1215" y="1253"/><use href="#mh" x="1193" y="1253"/>
<use href="#hG" x="1178" y="1323"/><use href="#h12" x="1222" y="1323"/><use href="#mh" x="1200" y="1323"/>
<use href="#hG" x="1178" y="1375"/><use href="#h12" x="1222" y="1375"/><use href="#mh" x="1200" y="1375"/>
<use href="#h3" x="1178" y="1451"/><use href="#h2s" x="1220" y="1451"/><use href="#mh" x="1199" y="1451"/>
<use href="#h3" x="1178" y="1495"/><use href="#h2s" x="1220" y="1495"/><use href="#mh" x="1199" y="1495"/>
<use href="#hG" x="1290" y="1346"/><use href="#hG" x="1290" y="1401"/><use href="#hG" x="1290" y="1456"/>
<use href="#v2s" x="858" y="1064"/><use href="#v3" x="858" y="1111"/><use href="#mk" x="858" y="1088"/>
<use href="#v2s" x="858" y="1234"/><use href="#v3" x="858" y="1284"/><use href="#mk" x="858" y="1259"/>
<use href="#v2s" x="858" y="1405"/><use href="#v3" x="858" y="1449"/><use href="#mk" x="858" y="1427"/>
<use href="#v2s" x="1100" y="1225"/><use href="#v1s" x="1100" y="1270"/><use href="#v1s" x="1103" y="1309"/><use href="#vG" x="1103" y="1352"/><use href="#mk" x="1103" y="1330"/>
<use href="#v2s" x="1100" y="1394"/><use href="#v1s" x="1100" y="1440"/><use href="#mk" x="1100" y="1417"/><use href="#v1s" x="1103" y="1481"/><use href="#vG" x="1103" y="1523"/><use href="#mk" x="1103" y="1502"/>
<use href="#v1s" x="1103" y="1139"/><use href="#vG" x="1103" y="1183"/><use href="#mk" x="1103" y="1161"/>
<use href="#v1s" x="1100" y="1064"/>
<use href="#vG" x="1163" y="1541"/><use href="#v3" x="1163" y="1587"/><use href="#mk" x="1163" y="1564"/>
<use href="#vG" x="1215" y="1541"/><use href="#v3" x="1215" y="1587"/><use href="#mk" x="1215" y="1564"/>
<use href="#rG" x="918" y="999"/><use href="#rG" x="1040" y="999"/>
<use href="#rG" x="918" y="1166"/><use href="#rG" x="1040" y="1166"/>
<use href="#rG" x="918" y="1336"/><use href="#rG" x="1040" y="1336"/>
<use href="#rG" x="918" y="1507"/><use href="#rG" x="1040" y="1507"/>
<g><rect class="pd" x="888" y="904" width="60" height="22"/><rect class="pd" x="1011" y="904" width="60" height="22"/><text class="pn" x="918" y="914">1</text><text class="pn" x="1040" y="914">1</text><text class="pl" x="918" y="923">Net-(R8-Pad2)</text><text class="pl" x="1040" y="923">Net-(R8-Pad2)</text></g>
<g><rect class="pd" x="888" y="1072" width="60" height="21"/><rect class="pd" x="1011" y="1072" width="60" height="21"/><text class="pn" x="918" y="1081">1</text><text class="pn" x="1040" y="1081">1</text><text class="pl" x="918" y="1091">Net-(R10-Pad2)</text><text class="pl" x="1040" y="1091">Net-(R10-Pad2)</text></g>
<g><rect class="pd" x="888" y="1240" width="60" height="22"/><rect class="pd" x="1011" y="1240" width="60" height="22"/><text class="pn" x="918" y="1250">1</text><text class="pn" x="1040" y="1250">1</text><text class="pl" x="918" y="1260">Net-(R12-Pad2)</text><text class="pl" x="1040" y="1260">Net-(R12-Pad2)</text></g>
<g><rect class="pd" x="888" y="1412" width="60" height="21"/><rect class="pd" x="1011" y="1412" width="60" height="21"/><text class="pn" x="918" y="1421">1</text><text class="pn" x="1040" y="1421">1</text><text class="pl" x="918" y="1431">Net-(R14-Pad2)</text><text class="pl" x="1040" y="1431">Net-(R14-Pad2)</text></g>

<g class="u3"><path d="M1267 812h36v8h-36zM1267 824h36v8h-36zM1267 836h36v8h-36zM1267 848h36v8h-36zM1267 860h36v8h-36zM1267 872h36v8h-36zM1267 884h36v8h-36zM1267 896h36v8h-36zM1267 908h36v8h-36zM1267 920h36v8h-36zM1267 932h36v8h-36zM1267 944h36v8h-36zM1267 956h36v8h-36zM1267 968h36v8h-36zM1267 980h36v8h-36zM1267 992h36v8h-36zM1267 1004h36v8h-36zM1267 1016h36v8h-36zM1267 1028h36v8h-36zM1267 1040h36v8h-36zM1267 1052h36v8h-36zM1267 1064h36v8h-36zM1267 1076h36v8h-36zM1267 1088h36v8h-36zM1267 1108h36v8h-36zM1267 1120h36v8h-36zM1267 1132h36v8h-36zM1267 1144h36v8h-36zM1267 1156h36v8h-36zM1276 1500h28v12h-28zM1276 1530h28v12h-28zM1276 1558h28v12h-28zM1276 1586h28v12h-28z"/></g>

<use href="#v1s" x="804" y="1630"/><use href="#v2s" x="804" y="1674"/><use href="#h2s" x="804" y="1720"/><use href="#hG" x="804" y="1766"/>
<use href="#v1s" x="876" y="1630"/><use href="#v2s" x="876" y="1674"/><use href="#h2s" x="876" y="1720"/><use href="#hG" x="876" y="1766"/>
<use href="#v1s" x="948" y="1630"/><use href="#v2s" x="948" y="1674"/><use href="#h2s" x="948" y="1720"/><use href="#hG" x="948" y="1766"/>
<use href="#v1s" x="1020" y="1630"/><use href="#v2s" x="1020" y="1674"/><use href="#h2s" x="1020" y="1720"/><use href="#hG" x="1020" y="1766"/>

<g class="nrow"><rect class="pd" x="1628" y="1618" width="24" height="20"/><rect class="pd" x="1672" y="1618" width="24" height="20"/><rect class="pd" x="1640" y="1648" width="24" height="22"/><rect class="pd" x="1683" y="1648" width="24" height="22"/><rect class="pd" x="1640" y="1693" width="24" height="30"/><rect class="pd" x="1683" y="1693" width="24" height="30"/><rect class="pd" x="1640" y="1738" width="24" height="30"/><rect class="pd" x="1683" y="1738" width="24" height="30"/></g>
<rect class="pd" x="2031" y="1630" width="20" height="32"/><rect class="pd" x="2078" y="1630" width="20" height="32"/>
<g class="pads6">
<rect class="pd" x="1885" y="1683" width="30" height="25" rx="6"/><rect class="pd" x="1930" y="1683" width="30" height="25" rx="6"/><rect class="pd" x="1974" y="1683" width="30" height="25" rx="6"/><rect class="pd" x="2019" y="1683" width="30" height="25" rx="6"/><rect class="pd" x="2068" y="1683" width="30" height="25" rx="6"/><rect class="pd" x="2119" y="1683" width="30" height="25" rx="6"/>
<rect class="pd" x="1885" y="1727" width="30" height="26" rx="6"/><rect class="pd" x="1930" y="1727" width="30" height="26" rx="6"/><rect class="pd" x="1974" y="1727" width="30" height="26" rx="6"/><rect class="pd" x="2019" y="1727" width="30" height="26" rx="6"/><rect class="pd" x="2068" y="1727" width="30" height="26" rx="6"/><rect class="pd" x="2119" y="1727" width="30" height="26" rx="6"/>
<text class="pn" x="1900" y="1693">2</text><text class="pn" x="1900" y="1704">DONE</text><text class="pn" x="1945" y="1693">2</text><text class="pn" x="1945" y="1704">RESET</text><text class="pn" x="1989" y="1693">1</text><text class="pn" x="1989" y="1704">+3V3</text><text class="pn" x="2034" y="1693">2</text><text class="pn" x="2034" y="1704">+3V3</text><text class="pn" x="2083" y="1693">1</text><text class="pn" x="2083" y="1704">+3V3</text><text class="pn" x="2134" y="1693">1</text><text class="pn" x="2134" y="1704">+3V3</text>
<text class="pn" x="1900" y="1740">1</text><text class="pn" x="1945" y="1740">1</text><text class="pn" x="1989" y="1740">2</text><text class="pn" x="2034" y="1740">1</text><text class="pn" x="2083" y="1740">2</text><text class="pn" x="2083" y="1750">GND</text><text class="pn" x="2134" y="1740">2</text><text class="pn" x="2134" y="1750">GND</text>
</g>
</g>

<circle cx="1768" cy="1650" r="20" fill="none" stroke="#f1eca0" stroke-width="3"/><circle cx="1768" cy="1650" r="16" class="rd"/>
<circle cx="2212" cy="1746" r="21" class="bgd"/><circle cx="2212" cy="1746" r="19" class="ylo"/><circle cx="2212" cy="1746" r="15" class="rd"/>
<use href="#tht" x="2304" y="1655"/><rect x="2284" y="1618" width="40" height="20" class="rd"/>
<path class="rtk" d="M2210 1650H2300M2170 1625L2210 1685"/>

<g class="sy">
<text x="1106" y="714">C34</text><text x="1158" y="714">C35</text>
<text x="1248" y="750">U3</text>
<text x="805" y="760">6</text>
<text x="805" y="1043" >1</text>
<text x="806" y="934">R8</text><text x="1158" y="942">R9</text>
<text x="1032" y="885">S1</text><text x="1032" y="1062">S2</text><text x="1158" y="1003">C8</text>
<text x="1054" y="818">R35</text>
<text x="1135" y="845" class="xs">C50</text><text x="1180" y="1065" class="xs">C52</text>
<text x="833" y="1152">R10</text><text x="833" y="1322">R12</text><text x="836" y="1490">R14</text>
<text x="1030" y="1222">S3</text><text x="1032" y="1396">S4</text>
<text x="804" y="1247">6</text><text x="800" y="1518">1</text>
<text x="1113" y="1258">IR13</text><text x="1120" y="1425">R15</text>
<text x="1168" y="1300">C55</text><text x="1267" y="1325">C45</text>
<text class="rot" transform="translate(1265 1235)rotate(-90)">C46 C49</text>
<text class="rot" transform="translate(1162 1100)rotate(-90)">C9</text>
<text class="rot" transform="translate(1155 1340)rotate(-90)">C10</text>
<text class="rot" transform="translate(1262 1398)rotate(-90)">C56</text>
<text class="rot" transform="translate(1254 1580)rotate(-90)">C25</text>
<text class="rot" transform="translate(1180 1530)rotate(-90)">R33</text>
<text x="1232" y="1612">U6</text>
<text x="1580" y="1675" class="n">R25</text><text x="1580" y="1725" class="n">R26</text><text x="1580" y="1765" class="n">R28</text>
<text x="1716" y="1710" class="n">DO</text><text x="1716" y="1755" class="n">SS</text><text x="1772" y="1698" class="n">TF5</text><text x="1716" y="1662" class="n">D1</text>
<text x="1920" y="1775" class="n">R31R23 R24C21 C22</text>
</g>
<g class="so">
<text x="773" y="594">FID2</text>
<text x="847" y="594" class="j2">J2</text>
<text x="778" y="684">C58</text>
<text x="836" y="714">C32</text><text x="890" y="714">C31</text><text x="940" y="714">C30</text><text x="992" y="714">C29</text>
<text x="680" y="1075">J5</text>
<text x="680" y="1565">J6</text><text x="734" y="1560">FID1</text><text x="745" y="1632">R4</text>
<text x="827" y="1615">R5</text><text x="898" y="1615">R6</text><text x="973" y="1615">R7</text>
<text x="752" y="1715">D3</text><text x="825" y="1715">D4</text><text x="898" y="1715">D5</text><text x="972" y="1715">D6</text>
<text x="767" y="1742">A</text><text x="838" y="1742">A</text><text x="912" y="1742">A</text><text x="984" y="1742">A</text>
<text x="1075" y="1570">C11</text><text x="1090" y="1600">C26</text>
<text class="rot" transform="translate(1128 1735)rotate(-90)">NC</text><text class="rot" transform="translate(1180 1732)rotate(-90)">5V</text><text class="rot" transform="translate(1235 1750)rotate(-90)">RT</text><text class="rot" transform="translate(1292 1755)rotate(-90)">3.3V</text>
<text class="rot" transform="translate(1341 1760)rotate(-90)">5V</text><text class="rot" transform="translate(1396 1762)rotate(-90)">GND</text><text class="rot" transform="translate(1450 1762)rotate(-90)">GND</text><text class="rot" transform="translate(1505 1740)rotate(-90)">5V</text>
<text x="1540" y="1720">J4</text><text x="1580" y="1640" class="n">R27</text><text x="1850" y="1778" class="n">R30</text>
<text x="2190" y="1720" class="n">TP2</text><text x="2196" y="1790" class="xs">GND</text><text x="2232" y="1680" class="n">J1</text><text x="2100" y="1665" class="n">R17</text>
</g>
<text x="1018" y="826" class="mir">oQAH</text>
<text transform="translate(1190 1073)rotate(180)" class="mir2">ne zeniqmiz cupe</text>
<text transform="translate(1190 1104)rotate(180)" class="mir2">zobidaq et stoT</text>
<path class="mg" d="M968 957h20M978 947v20M969 1124h20M979 1114v20M969 1293h20M979 1283v20M1066 1383h20M1076 1373v20"/>

<rect x="70" y="270" width="2885" height="1854" fill="url(#mn)"/>
<rect x="70" y="270" width="2885" height="1854" fill="url(#mj)"/>
<path class="xhair" d="M70 1629.500H2955M2653.500 270V2124"/>
</svg>

<div class="infobar">
<svg class="warn" viewBox="0 0 28 28"><path d="M14 2L27 26H1z" fill="#eee" stroke="#c8352e" stroke-width="2.500"/><path d="M12.500 10h3v9h-3zM12.500 20.500h3v3h-3z" fill="#222"/></svg>
<p class="infotext">This file was created by an older version of KiCad. It will be converted to the new format when saved.</p>
<svg class="infoclose" viewBox="0 0 24 24"><path d="M2 2l20 20M22 2L2 22" stroke="#6a6a66" stroke-width="1.500"/></svg>
</div>
</section>

<aside class="rtool">
<span class="tv sel"><svg class="ic" viewBox="0 0 48 48"><path d="M12 8l28 20-12 2 6 12-6 3-6-13-9 8z" fill="#e4dfe6"/></svg></span>
<span class="tv"><svg class="ic" viewBox="0 0 48 48"><path d="M0 44L48 6M0 6l48 38" stroke="#dcd6de" stroke-width="2"/><ellipse cx="24" cy="25" rx="6" ry="4" fill="#fff"/></svg></span>
<i class="hs"></i>
<span class="tv"><svg class="ic" viewBox="0 0 48 48"><path d="M4 6h12v14H4zM20 6h12v14H20zM34 6h12v14H34zM4 30h12v14H4zM20 30h12v14H20zM34 30h12v14H34z" fill="#5fb2e8"/><path d="M44 6h6v38h-6" fill="none" stroke="#dcd6de" stroke-width="2"/></svg></span>
<span class="tv"><svg class="ic" viewBox="0 0 48 48"><path d="M0 34h24L46 6" fill="none" stroke="#5fb2e8" stroke-width="3.500"/><use href="#tri" x="44" y="46" width="14" height="14"/></svg></span>
<span class="tv"><svg class="ic" viewBox="0 0 48 48"><path d="M0 14v12c0 10 12 10 12 0V12c0-8 12-8 12 0v14c0 8 10 8 14 0h8" fill="none" stroke="#4fa0d8" stroke-width="4"/><use href="#tri" x="44" y="40" width="14" height="14"/></svg></span>
<span class="tv"><svg class="ic" viewBox="0 0 48 48"><ellipse cx="22" cy="24" rx="23" ry="14" fill="#c08030"/><ellipse cx="22" cy="24" rx="11" ry="6" fill="#aaa"/></svg></span>
<span class="tv"><svg class="ic" viewBox="0 0 48 48"><path d="M0 4h46v40H0z" fill="#4592c4"/><path d="M46 18H28c-8 0-8 12 0 12h18" fill="none" stroke="#2c2c2c" stroke-width="5"/><circle cx="26" cy="24" r="4" fill="#ddd"/></svg></span>
<span class="tv"><svg class="ic" viewBox="0 0 48 48"><path d="M0 6h46v40H0z" fill="#555"/><path d="M0 18L30 6M0 30L46 10M4 46L46 26M28 46L46 38" stroke="#bdb8c0" stroke-width="4"/><path d="M0 6h46v40H0z" fill="none" stroke="#bdb8c0" stroke-width="2.500"/></svg></span>
<i class="hs"></i>
<span class="tv"><svg class="ic" viewBox="0 0 48 48"><path d="M0 44L44 14" stroke="#b5b0b8" stroke-width="3.500"/></svg></span>
<span class="tv"><svg class="ic" viewBox="0 0 48 48"><path d="M0 36C12 20 30 18 44 18" fill="none" stroke="#b5b0b8" stroke-width="3.500"/></svg></span>
<span class="tv"><svg class="ic" viewBox="0 0 48 48"><path d="M0 8h44v32H0z" fill="#666" stroke="#bdb8c0" stroke-width="3.500"/></svg></span>
<span class="tv"><svg class="ic" viewBox="0 0 48 48"><circle cx="20" cy="24" r="22" fill="#666" stroke="#bdb8c0" stroke-width="3.500"/></svg></span>
<span class="tv"><svg class="ic" viewBox="0 0 48 48"><path d="M0 6l44 6-2 30H0z" fill="#666" stroke="#bdb8c0" stroke-width="3"/><path d="M0 14l12 10-12 10" fill="none" stroke="#bdb8c0" stroke-width="3"/></svg></span>
<span class="tv"><svg class="ic" viewBox="0 0 48 48"><path d="M0 38h44" stroke="#4a8ec0" stroke-width="4"/><path d="M30 38c10-8 10-18 2-24" fill="none" stroke="#c9c4cc" stroke-width="4"/><circle cx="22" cy="38" r="4" fill="#4a8ec0"/></svg></span>
<span class="tv"><svg class="ic" viewBox="0 0 48 48"><path d="M0 4h36a6 6 0 0 1 6 6v30a6 6 0 0 1-6 6H0z" fill="#cfc9d1"/><ellipse cx="22" cy="14" rx="6" ry="5" fill="#333"/><path d="M0 24l14 4 18 14H0z" fill="#555"/></svg></span>
<span class="tv"><svg class="ic" viewBox="0 0 48 48"><path d="M2 4h40v8H28v34H18V12H2z" fill="#b5b0b8"/></svg></span>
<span class="tv"><svg class="ic" viewBox="0 0 48 48"><path d="M0 6h44v38H0z" fill="#aaa6ae"/><path d="M4 16h28M4 24h20M4 32h16" stroke="#666" stroke-width="2"/></svg></span>
<span class="tv"><svg class="ic" viewBox="0 0 48 48"><path d="M1 2h46v44H1zM1 12h46M1 24h46M1 35h46M17 2v44M32 2v44" fill="none" stroke="#aaa6ae" stroke-width="2.500"/></svg></span>
<span class="tv"><svg class="ic" viewBox="0 0 48 48"><path d="M0 2h44" stroke="#cfc9d1" stroke-width="2"/><path d="M32 6v22M28 11l4-5 4 5M28 23l4 5 4-5" fill="none" stroke="#cfc9d1" stroke-width="2.500"/><path d="M14 36h24" stroke="#cfc9d1" stroke-width="2"/><ellipse cx="10" cy="36" rx="6" ry="4" fill="#4a8ec0"/><use href="#tri" x="44" y="38" width="14" height="14"/></svg></span>
<span class="tv"><svg class="ic" viewBox="0 0 48 48"><path d="M0 4l16 8-6 6z" fill="#cfc9d1"/><ellipse cx="24" cy="26" rx="14" ry="13" fill="#d04c68"/><path d="M18 22l12 9M30 22l-12 9" stroke="#fff" stroke-width="3.500"/></svg></span>
<i class="hs"></i>
<span class="tv"><svg class="ic" viewBox="0 0 48 48"><g fill="#cfc9d1"><ellipse cx="2" cy="8" rx="4" ry="3"/><ellipse cx="20" cy="8" rx="4" ry="3"/><ellipse cx="38" cy="8" rx="4" ry="3"/><ellipse cx="2" cy="20" rx="4" ry="3"/><ellipse cx="20" cy="20" rx="4" ry="3"/><ellipse cx="38" cy="20" rx="4" ry="3"/><ellipse cx="2" cy="40" rx="4" ry="3"/><ellipse cx="20" cy="40" rx="4" ry="3"/><ellipse cx="38" cy="40" rx="4" ry="3"/></g><path d="M2 30h38" stroke="#cfc9d1" stroke-width="2"/><path d="M0 22h5v18H0z" fill="#4a8ec0"/><use href="#tri" x="44" y="38" width="14" height="14"/></svg></span>
<span class="tv"><svg class="ic" viewBox="0 0 48 48"><path d="M2 34L38 10l8 8L10 42z" fill="none" stroke="#cfc9d1" stroke-width="4"/><path d="M12 28l5 6M22 22l5 6M32 15l5 6" stroke="#cfc9d1" stroke-width="3"/></svg></span>
</aside>

<aside class="panel">
<h2 class="ptitle">Appearance</h2>
<div class="pgroup">
<div class="tabs"><span class="tab on">Layers</span><span class="tab">Objects</span><span class="tab">Nets</span></div>
<ul class="layers">
<li class="layer cur"><i class="arr"></i><i class="sw s1"></i><svg class="eye"><use href="#eye"/></svg><span>F.Cu</span></li>
<li class="layer"><i class="arr"></i><i class="sw s2"></i><svg class="eye"><use href="#eye"/></svg><span>B.Cu</span></li>
<li class="layer"><i class="arr"></i><i class="sw s3"></i><svg class="eye"><use href="#eye"/></svg><span>F.Adhes</span></li>
<li class="layer"><i class="arr"></i><i class="sw s4"></i><svg class="eye"><use href="#eyeoff"/></svg><span>B.Adhes</span></li>
<li class="layer"><i class="arr"></i><i class="sw s5"></i><svg class="eye"><use href="#eyeoff"/></svg><span>F.Paste</span></li>
<li class="layer"><i class="arr"></i><i class="sw s6"></i><svg class="eye"><use href="#eyeoff"/></svg><span>B.Paste</span></li>
<li class="layer"><i class="arr"></i><i class="sw s7"></i><svg class="eye"><use href="#eye"/></svg><span>F.SilkS</span></li>
<li class="layer"><i class="arr"></i><i class="sw s8"></i><svg class="eye"><use href="#eye"/></svg><span>B.SilkS</span></li>
<li class="layer"><i class="arr"></i><i class="sw s9"></i><svg class="eye"><use href="#eye"/></svg><span>F.Mask</span></li>
<li class="layer"><i class="arr"></i><i class="sw s10"></i><svg class="eye"><use href="#eye"/></svg><span>B.Mask</span></li>
<li class="layer"><i class="arr"></i><i class="sw s11"></i><svg class="eye"><use href="#eyeoff"/></svg><span>Dwgs.User</span></li>
<li class="layer"><i class="arr"></i><i class="sw s12"></i><svg class="eye"><use href="#eyeoff"/></svg><span>Cmts.User</span></li>
<li class="layer"><i class="arr"></i><i class="sw s13"></i><svg class="eye"><use href="#eyeoff"/></svg><span>Eco1.User</span></li>
<li class="layer"><i class="arr"></i><i class="sw s14"></i><svg class="eye"><use href="#eyeoff"/></svg><span>Eco2.User</span></li>
<li class="layer"><i class="arr"></i><i class="sw s15"></i><svg class="eye"><use href="#eye"/></svg><span>Edge.Cuts</span></li>
<li class="layer"><i class="arr"></i><i class="sw s16"></i><svg class="eye"><use href="#eye"/></svg><span>Margin</span></li>
<li class="layer"><i class="arr"></i><i class="sw s16"></i><svg class="eye"><use href="#eyeoff"/></svg><span>F.CrtYd</span></li>
<li class="layer"><i class="arr"></i><i class="sw s18"></i><svg class="eye"><use href="#eyeoff"/></svg><span>B.CrtYd</span></li>
<li class="layer"><i class="arr"></i><i class="sw s19"></i><svg class="eye"><use href="#eyeoff"/></svg><span>F.Fab</span></li>
<li class="layer"><i class="arr"></i><i class="sw s20"></i><svg class="eye"><use href="#eyeoff"/></svg><span>B.Fab</span></li>
</ul>
<div class="ldo"><i class="ldotri"></i>Layer Display Options</div>
</div>
<div class="presets">
<label class="plabel">Presets (Ctrl+Tab):</label>
<div class="pcombo"><i class="pline"></i><svg class="pchev"><use href="#chev"/></svg></div>
<label class="plabel">Viewports (Option+Tab):</label>
<div class="pcombo"><i class="pline"></i><svg class="pchev"><use href="#chev"/></svg></div>
</div>
<h2 class="stitle">Selection Filter</h2>
<div class="filter">
<div class="fi"><span class="cb"><svg><use href="#chk"/></svg></span>All items</div>
<div class="fi"><span class="cb"></span>Locked items</div>
<div class="fi"><span class="cb"><svg><use href="#chk"/></svg></span>Footprints</div>
<div class="fi"><span class="cb"><svg><use href="#chk"/></svg></span>Text</div>
<div class="fi"><span class="cb"><svg><use href="#chk"/></svg></span>Tracks</div>
<div class="fi"><span class="cb"><svg><use href="#chk"/></svg></span>Vias</div>
<div class="fi"><span class="cb"><svg><use href="#chk"/></svg></span>Pads</div>
<div class="fi"><span class="cb"><svg><use href="#chk"/></svg></span>Graphics</div>
<div class="fi"><span class="cb"><svg><use href="#chk"/></svg></span>Zones</div>
<div class="fi"><span class="cb"><svg><use href="#chk"/></svg></span>Rule Areas</div>
<div class="fi"><span class="cb"><svg><use href="#chk"/></svg></span>Dimensions</div>
<div class="fi"><span class="cb"><svg><use href="#chk"/></svg></span>Other items</div>
</div>
</aside>

<section class="msg">
<div class="mc m1"><span>Pads</span><span>558</span></div>
<div class="mc m2"><span>Vias</span><span>196</span></div>
<div class="mc m3"><span>Track Segments</span><span>1674</span></div>
<div class="mc m4"><span>Nets</span><span>184</span></div>
<div class="mc"><span>Unrouted</span><span>0</span></div>
</section>
</main>

<footer class="status">
<span class="st1">Z 2.96</span>
<span class="st2">X 195.0000&nbsp; Y 113.1500</span>
<span class="st3">dx 195.0000&nbsp; dy 113.1500&nbsp; dist 225.4505</span>
<span class="st4">grid 0.1000</span>
<span class="st5">mm</span>
<span class="st6">Constrain to H, V, 45</span>
</footer>

<div class="dialog">
<div class="dtitle">
<i class="light red"></i><i class="light amber"></i><i class="light green"></i>
<span class="dname">KIC-AI Assistant - PCB</span>
</div>
<div class="dbody">
<div class="chat">
<p>[21:24] <svg class="robot" viewBox="0 0 28 34"><path d="M14 1a2.500 2.500 0 0 1 2 4v3h-4V5a2.500 2.500 0 0 1 2-4z" fill="#e0a030"/><path d="M12 5h4v3h-4z" fill="#7a5ac0"/><path d="M0 16h3v10H0zM25 16h3v10h-3z" fill="#a03a30"/><rect x="2" y="8" width="24" height="25" rx="4" fill="#6d9cac"/><rect x="2" y="22" width="24" height="11" rx="4" fill="#3f6a80"/><circle cx="8.500" cy="17" r="5" fill="#d8eef6"/><circle cx="19.500" cy="17" r="5" fill="#d8eef6"/><circle cx="8.500" cy="17" r="2.500" fill="#3aa0d8"/><circle cx="19.500" cy="17" r="2.500" fill="#3aa0d8"/><path d="M14 17l2.500 6h-5z" fill="#d05040"/><rect x="9" y="26" width="10" height="4" rx="1" fill="#222"/></svg> KIC-AI:</p>
<p>Chat cleared. How can I help you?</p>
</div>
<div class="drow">
<div class="dinput">Type your question here...</div>
<button class="dbtn b1">Send</button>
<button class="dbtn b2">Analyze PCB</button>
<button class="dbtn b3">Clear Chat</button>
<button class="dbtn b4">Show Context</button>
</div>
<div class="ready">Ready</div>
</div>
</div>
</div>
</body>
</html>
```
FILE: styles.css
```
* { box-sizing: border-box; }
html, body { margin: 0; padding: 0; background: #000; }
body { width: 3456px; height: 2234px; overflow: hidden; font-family: "Liberation Sans", Arial, sans-serif; }
.defs { position: absolute; }
.app { position: relative; width: 3456px; height: 2234px; display: flex; flex-direction: column; }
.titlebar { height: 74px; background: #000; flex: none; }

.toolbar { height: 136px; background: #333; flex: none; }
.tbrow { height: 68px; display: flex; align-items: center; padding-left: 8px; }
.ti { width: 64px; height: 48px; display: flex; justify-content: center; flex: none; }
.ic { width: 48px; height: 48px; overflow: visible; display: block; }
.ict { font: 700 22px "Liberation Sans", sans-serif; fill: #dcd6de; }
.ict2 { font: 700 18px "Liberation Sans", sans-serif; fill: #dcd6de; }
.it { font-style: italic; }
.ict3 { font: 700 24px "Liberation Sans", sans-serif; fill: #dcd6de; }
.sp { width: 18px; height: 46px; flex: none; position: relative; }
.sp::after { content: ""; position: absolute; left: 8px; top: 0; bottom: 0; width: 2px; background: #4a4a4a; }

.tbrow2 { padding-left: 11px; height: 68px; }
.combo { height: 40px; background: #666; border-radius: 9px; color: #ececec; font-size: 27.3px; display: flex; align-items: center; justify-content: space-between; padding: 0 13px 0 15px; flex: none; box-shadow: 0 1px 1px #222; white-space: nowrap; }
.chev { width: 16px; height: 36px; }
.c-track { width: 369px; }
.c-via { width: 357px; }
.c-grid { width: 400px; }
.c-zoom { width: 227px; }
.toggle { width: 59px; height: 60px; margin-left: 4px; background: #12203a; border: 2px solid #3d5f8a; display: flex; align-items: center; justify-content: center; flex: none; }
.toggle .ic { width: 44px; height: 46px; }
.vr { width: 2px; height: 50px; background: #4a4a4a; margin: 0 10px; flex: none; }
.v2 { margin: 0 11px 0 15px; }
.layerbox { width: 259px; height: 44px; background: #1c1c1e; border: 3px solid #777; color: #ececec; font-size: 26px; display: flex; align-items: center; gap: 12px; padding-left: 7px; flex: none; margin-left: 1px; }
.lsw { width: 28px; height: 28px; background: #b8403c; border: 2px solid #111; flex: none; }
.whitebtn { width: 41px; height: 40px; border-radius: 10px; background: #fff; margin-left: 8px; display: flex; align-items: center; justify-content: center; flex: none; }
.wchev { width: 16px; height: 12px; }
.pair { width: 48px; height: 48px; margin-left: 13px; flex: none; }

.work { height: 1970px; flex: none; display: grid; grid-template-columns: 68px 2887px 83px 418px; grid-template-rows: 1914px 56px; background: #333; }
.ltool { grid-column: 1; grid-row: 1; padding-top: 8px; display: flex; flex-direction: column; align-items: center; background: #333; }
.tv { width: 64px; height: 64px; display: flex; align-items: center; justify-content: center; flex: none; }
.tv.sel { background: #111b2e; box-shadow: inset 0 0 0 2px #3d5f8a; width: 60px; height: 60px; margin: 2px; }
.hs { width: 44px; height: 2px; margin: 8px 0; background: #4a4a4a; flex: none; }

.canvas { grid-column: 2; grid-row: 1; position: relative; overflow: hidden; background: #010f22; }
.board { position: absolute; left: 0; top: 0; display: block; font-family: "Liberation Sans", sans-serif; }
.infobar { position: relative; height: 60px; background: #1e1d19; display: flex; align-items: flex-start; overflow: hidden; padding-left: 12px; }
.warn { width: 28px; height: 28px; margin-top: 16px; flex: none; }
.infotext { margin: 0; width: 1160px; padding-left: 12px; color: #eee; font-size: 27.3px; line-height: 30px; padding-top: 15px; }
.infoclose { position: absolute; left: 2843px; top: 18px; width: 24px; height: 24px; }

.rtool { grid-column: 3; grid-row: 1 / 3; padding-top: 8px; padding-right: 16px; display: flex; flex-direction: column; align-items: center; background: #333; }

.panel { grid-column: 4; grid-row: 1 / 3; background: #333; }
.ptitle { margin: 0; height: 34px; background: #1f1f1f; color: #e0e0e0; font-weight: 400; font-size: 23px; line-height: 34px; padding-left: 7px; }
.pgroup { position: relative; margin-top: 47px; height: 1400px; background: #3a3a3a; border: 2px solid #454545; border-radius: 14px; border-left-color: #484848; padding: 0 4px; }
.tabs { position: absolute; left: 37px; top: -23px; width: 342px; height: 44px; border: 2px solid #4c4c4c; border-radius: 12px; background: #333; display: grid; grid-template-columns: 115px 127px 1fr; color: #ddd; font-size: 23px; }
.tab { display: flex; align-items: center; justify-content: center; }
.tab.on { background: #6b6b6b; border-radius: 10px; color: #e8e8e8; }
.layers { list-style: none; margin: 0; padding: 32px 0 0 4px; }
.layer { height: 36px; display: flex; align-items: center; color: #d8d8d8; font-size: 24px; padding-left: 11px; margin-right: 4px; }
.layer.cur { background: #4b4b4b; }
.arr { width: 10px; height: 18px; flex: none; margin-left: -2px; }
.cur .arr { background: #4040ff; clip-path: polygon(0 0, 100% 50%, 0 100%); }
.sw { width: 32px; height: 24px; margin-left: 11px; flex: none; }
.eye { width: 30px; height: 20px; margin: 0 11px 0 11px; flex: none; }
.s1 { background: #b8403c; } .s2 { background: #5a80c4; } .s3 { background: #7a1480; } .s4 { background: #00007e; }
.s5 { background: #9e8c86; } .s6 { background: #4aa6a6; } .s7 { background: #f1eca6; } .s8 { background: #e5b4aa; }
.s9 { background: repeating-conic-gradient(#5a3a74 0 25%, #4e2e68 0 50%) 0 0 / 22px 24px; }
.s10 { background: repeating-conic-gradient(#377670 0 25%, #2b6660 0 50%) 0 0 / 22px 24px; }
.s11 { background: #bdbdbd; } .s12 { background: #6890d8; } .s13 { background: #bddcd4; } .s14 { background: #d8cc64; }
.s15 { background: #cfcfca; } .s16 { background: #e63bd8; } .s18 { background: #6ae8fa; } .s19 { background: #aaa; } .s20 { background: #5a5a88; }
.ldo { position: absolute; left: 28px; bottom: 12px; color: #686868; font-size: 24px; display: flex; align-items: center; gap: 5px; }
.ldotri { width: 10px; height: 14px; background: #686868; clip-path: polygon(0 0, 100% 50%, 0 100%); }
.presets { padding: 8px 14px 0 14px; height: 191px; }
.plabel { display: block; color: #dcdcdc; font-size: 26.5px; line-height: 32px; height: 34px; white-space: nowrap; }
.pcombo { height: 40px; background: #666; border-radius: 10px; margin-bottom: 9px; position: relative; display: flex; align-items: center; padding-left: 16px; }
.pline { width: 332px; height: 2px; background: #999; }
.pchev { position: absolute; right: 12px; top: 2px; width: 16px; height: 36px; }
.stitle { margin: 0; height: 32px; background: #1f1f1f; color: #dcdcdc; font-weight: 400; font-size: 23.3px; line-height: 32px; padding-left: 7px; }
.filter { display: grid; grid-template-columns: 200px 1fr; grid-auto-rows: 32px; padding: 11px 0 0 10px; color: #d8d8d8; font-size: 25px; }
.fi { display: flex; align-items: center; gap: 13px; white-space: nowrap; }
.cb { width: 28px; height: 26px; background: #666; border-radius: 6px; flex: none; display: block; }
.cb svg { width: 28px; height: 26px; display: block; }

.msg { grid-column: 1 / 3; grid-row: 2; border-top: 2px solid #282828; display: flex; padding-left: 22px; color: #646464; font-size: 22px; }
.mc { display: flex; flex-direction: column; gap: 1px; padding-top: 5px; line-height: 25px; margin-right: 41px; }
.m1 { width: 70px; }
.m2 { width: 66px; }
.m3 { width: 190px; }
.m4 { width: 70px; }

.status { height: 54px; flex: none; background: #2f2f2f; border-top: 2px solid #0a0a0a; display: flex; align-items: center; color: #646464; font-size: 23px; padding-left: 1457px; white-space: nowrap; }
.st1 { width: 146px; } .st2 { width: 315px; } .st3 { width: 500px; } .st4 { width: 362px; } .st5 { width: 428px; }
.st6 { font-size: 24px; }

.dialog { position: absolute; left: 1307px; top: 375px; width: 1671px; height: 1243px; border-radius: 20px; background: #2d2c2a; box-shadow: 0 0 0 2px #555, 0 6px 24px rgba(0,0,0,.7); overflow: hidden; display: flex; flex-direction: column; }
.dtitle { height: 55px; background: #3b3b39; border-bottom: 2px solid #111; position: relative; display: flex; align-items: center; justify-content: center; flex: none; }
.light { position: absolute; top: 15px; width: 24px; height: 24px; border-radius: 50%; }
.red { left: 15px; background: #ee6a5e; } .amber { left: 55px; background: #f5bf4f; } .green { left: 95px; background: #61c554; }
.dname { color: #aaa; font-weight: 700; font-size: 27px; }
.dbody { flex: 1; padding: 24px 24px 0 21px; display: flex; flex-direction: column; }
.chat { height: 1039px; width: 1595px; margin-left: 2px; background: #1e1e1e; color: #f2f2f2; font-size: 28px; line-height: 32px; padding: 10px 10px; flex: none; }
.chat p { margin: 0; }
.robot { width: 30px; height: 34px; vertical-align: -7px; margin: 0 4px 0 2px; }
.drow { display: flex; align-items: center; margin-top: 25px; flex: none; height: 40px; }
.dinput { width: 849px; height: 36px; background: #3a3936; border-bottom: 2px solid #555; color: #6c6c6c; font-size: 24px; line-height: 30px; padding-left: 5px; flex: none; }
.dbtn { height: 40px; background: #666; border: 0; border-radius: 9px; color: #f0f0f0; font: 26px "Liberation Sans", sans-serif; padding: 0; flex: none; }
.b1 { width: 166px; margin-left: 13px; } .b2 { width: 195px; margin-left: 10px; } .b3 { width: 167px; margin-left: 11px; } .b4 { width: 209px; margin-left: 11px; }
.ready { color: #eee; font-style: italic; font-size: 22px; margin-top: 17px; }

/* PCB */
.bg, .bgd { fill: #010f22; }
.edge { fill: #010f22; stroke: #d8d8d0; stroke-width: 3.500; }
.blue { fill: #2c5088; }
.maroon { fill: #8b3c50; }
.maroon2 { fill: #a84a58; }
.pink { fill: #e9b3a8; }
.pinkl { fill: #e9b3a8; }
.lav { fill: #8b9cc8; }
.outl { fill: none; stroke: #7f95c8; stroke-width: 3; }
.halo { fill: none; stroke: #010f22; stroke-width: 11; stroke-linejoin: round; }
.rtk { fill: none; stroke: #c5302f; stroke-width: 5; stroke-linejoin: round; }
.btk { fill: none; stroke: #4a7fd0; stroke-width: 5; stroke-linejoin: round; }
.btk2 { fill: none; stroke: #4a7fd0; stroke-width: 24; }
.btkw { fill: none; stroke: #4a7fd0; stroke-width: 14; stroke-linejoin: round; }
.rthk { fill: none; stroke: #c5302f; stroke-width: 9; stroke-linejoin: round; }
.rthick { fill: none; stroke: #c5302f; stroke-width: 6; }
.mgrp { fill: none; stroke: #752533; stroke-width: 7; }
.fine { fill: none; stroke: #c5302f; stroke-width: 5; }
.silko { fill: none; stroke: #d98a60; stroke-width: 3.500; }
.silky { fill: none; stroke: #f1eca0; stroke-width: 3.500; }
.dash { fill: none; stroke: #d98a60; stroke-width: 2; stroke-dasharray: 12 8; }
.thin { fill: none; stroke: #c25a5a; stroke-width: 1.200; opacity: .7; }
.cir { fill: none; stroke: #8a8f96; stroke-width: 1.200; }
.rd { fill: #c5302f; } .yl { fill: #e3b12d; } .bl { fill: #4f70b4; }
.ylo { fill: #f1eca0; }
.pd { fill: #c5302f; stroke: #9a5cc8; stroke-width: 1; }
.u3 path { fill: #a82a2e; }
.pn { font-size: 12px; fill: #f1d8d8; text-anchor: middle; }
.pm { font-size: 6px; fill: #eab8b8; text-anchor: middle; }
.pl { font-size: 9px; fill: #f1d8d8; text-anchor: middle; }
.plbl text { font-size: 20px; fill: #e8b8b8; fill-opacity: .7; text-anchor: middle; }
.sy text { font-size: 29px; fill: #f1eca0; letter-spacing: -1px; }
.so text { font-size: 29px; fill: #d98a60; letter-spacing: -1px; }
.sy .xs, .so .xs { font-size: 20px; }
.sy .n, .so .n { font-size: 27px; }
.j2 { font-size: 32px; }
.mir { font-size: 28px; fill: #1a1216; font-weight: 700; letter-spacing: 1px; }
.mir2 { font-size: 20px; fill: #1a1216; }
.mg { fill: none; stroke: #b030c0; stroke-width: 2; }
.xhair { fill: none; stroke: #c0c4c8; stroke-width: 1; }
```
